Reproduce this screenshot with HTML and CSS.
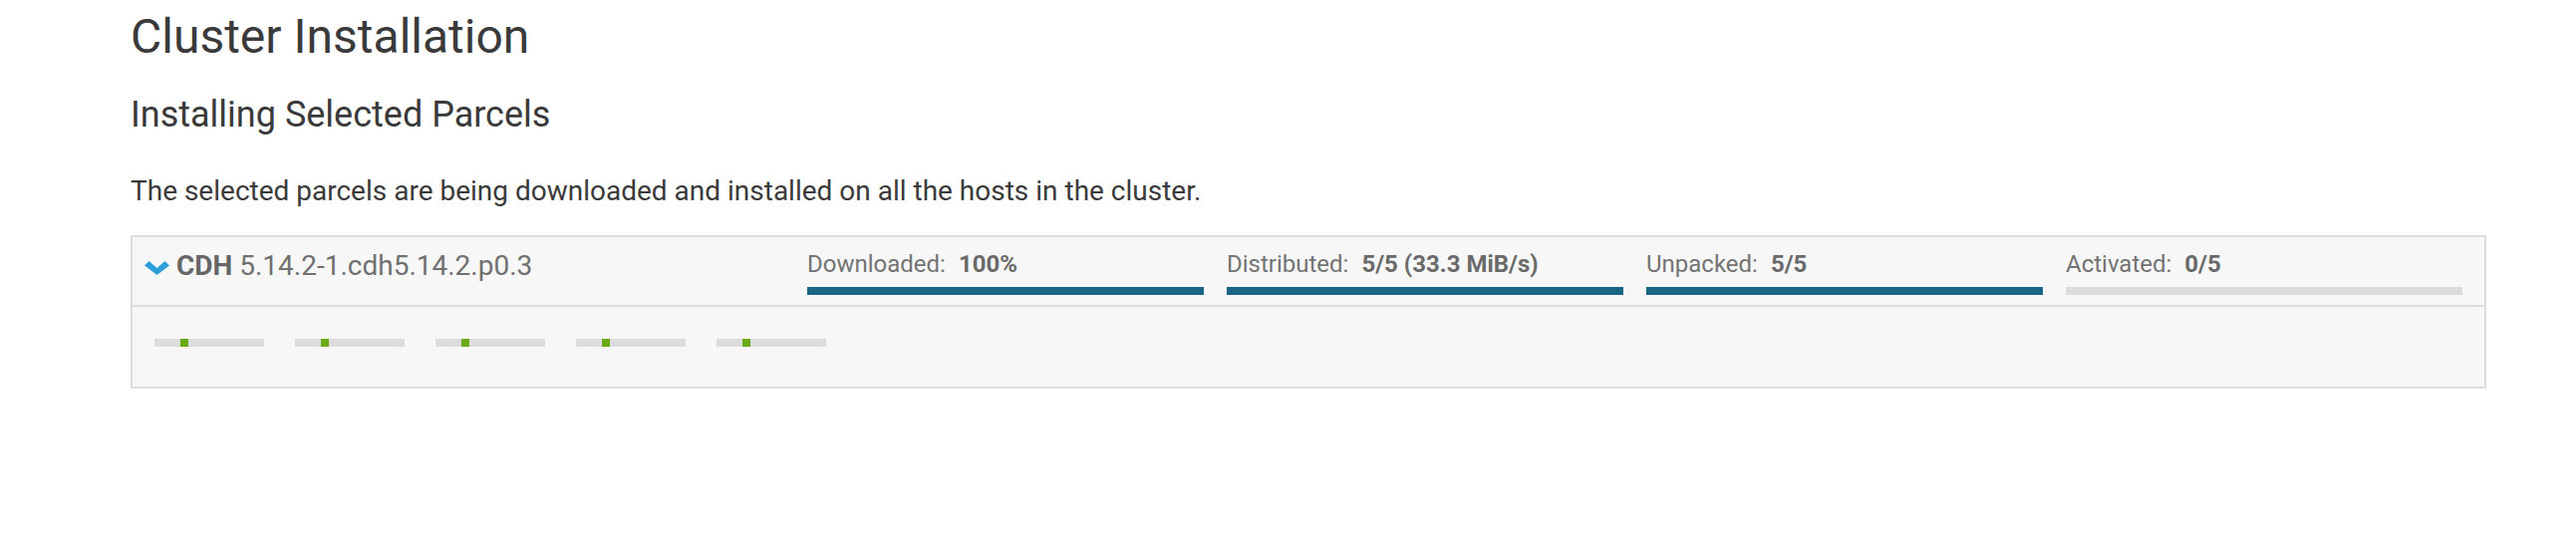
FILE: index.html
```html
<!DOCTYPE html>
<html>
<head>
<meta charset="utf-8">
<link rel="stylesheet" href="styles.css">
</head>
<body>
<div class="page">
  <h1 class="title">Cluster Installation</h1>
  <h2 class="subtitle">Installing Selected Parcels</h2>
  <p class="intro">The selected parcels are being downloaded and installed on all the hosts in the cluster.</p>

  <div class="parcel">
    <div class="parcel-head">
      <div class="parcel-name">
        <svg class="chev" width="25" height="14" viewBox="0 0 25 14"><polygon points="0,4.6 4.6,0 12.5,7 20.4,0 25,4.6 12.5,14" fill="#2c9fd8"/></svg>
        <b class="product">CDH</b> <span class="version">5.14.2-1.cdh5.14.2.p0.3</span>
      </div>
      <div class="stage">
        <div class="stage-label">Downloaded: <b class="val">100%</b></div>
        <div class="bar"><div class="fill" style="width:100%"></div></div>
      </div>
      <div class="stage">
        <div class="stage-label">Distributed: <b class="val">5/5 (33.3 MiB/s)</b></div>
        <div class="bar"><div class="fill" style="width:100%"></div></div>
      </div>
      <div class="stage">
        <div class="stage-label">Unpacked: <b class="val">5/5</b></div>
        <div class="bar"><div class="fill" style="width:100%"></div></div>
      </div>
      <div class="stage">
        <div class="stage-label">Activated: <b class="val">0/5</b></div>
        <div class="bar"><div class="fill" style="width:0%"></div></div>
      </div>
    </div>
    <div class="parcel-hosts">
      <div class="mini"><span class="tick"></span></div>
      <div class="mini"><span class="tick"></span></div>
      <div class="mini"><span class="tick"></span></div>
      <div class="mini"><span class="tick"></span></div>
      <div class="mini"><span class="tick"></span></div>
    </div>
  </div>
</div>
</body>
</html>
```

FILE: styles.css
```css
html, body {
  margin: 0;
  padding: 0;
  background: #ffffff;
}
body {
  font-family: Roboto, "Liberation Sans", sans-serif;
  color: #3a3a3a;
}
.page {
  margin-left: 131px;
  width: 2364px;
  padding-top: 9px;
}
.title {
  margin: 0;
  font-size: 48px;
  line-height: 56px;
  font-weight: 400;
  color: #3a3a3a;
}
.subtitle {
  margin: 28px 0 0;
  font-size: 36px;
  line-height: 44px;
  font-weight: 400;
  color: #3a3a3a;
}
.intro {
  margin: 37px 0 0;
  font-size: 28px;
  line-height: 36px;
  color: #3a3a3a;
}
.parcel {
  margin-top: 26px;
  border: 2px solid #dddddd;
  background: #f7f7f7;
}
.parcel-head {
  display: flex;
  gap: 23px;
  padding: 12px 22px 10px 12px;
  border-bottom: 2px solid #dddddd;
}
.parcel-name {
  flex: 1;
  font-size: 28px;
  line-height: 34px;
  color: #6b6b6b;
  white-space: nowrap;
}
.chev {
  vertical-align: baseline;
}
.product {
  font-weight: 700;
  color: #666666;
}
.version {
  color: #707070;
}
.stage {
  width: 398px;
  flex: 0 0 398px;
}
.stage-label {
  font-size: 24px;
  line-height: 30px;
  color: #737373;
  white-space: nowrap;
}
.val {
  font-weight: 700;
  color: #6a6a6a;
  margin-left: 7px;
}
.bar {
  margin-top: 8px;
  height: 8px;
  background: #dcdcdc;
}
.fill {
  height: 100%;
  background: #1b6584;
}
.parcel-hosts {
  display: flex;
  gap: 31px;
  padding: 32px 0 40px 22px;
}
.mini {
  width: 110px;
  height: 8px;
  background: #dcdcdc;
}
.tick {
  display: block;
  margin-left: 26px;
  width: 8px;
  height: 8px;
  background: #6aab15;
}
```
